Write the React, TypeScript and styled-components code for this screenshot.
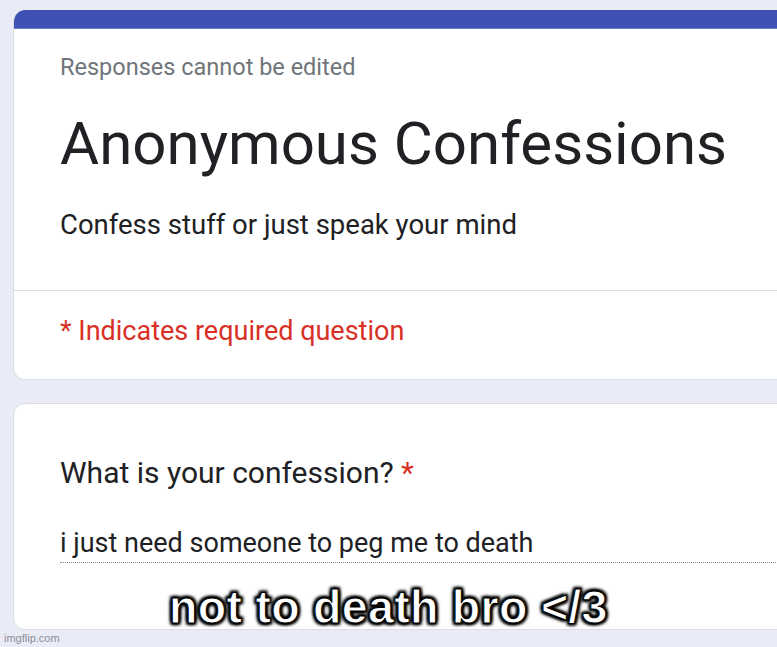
import { FC } from 'react';
import styled, { createGlobalStyle } from 'styled-components';

const GlobalStyle = createGlobalStyle`
  html, body {
    margin: 0;
    padding: 0;
    background: #e9ebf6;
    overflow: hidden;
  }
  body {
    font-family: Roboto, "Noto Sans", Arial, sans-serif;
    color: #202124;
  }
`;

const App: FC = () => {
  return (
    <>
      <GlobalStyle />
      <Page>
        <HeaderCard>
          <ThemeBar />
          <HeaderBody>
            <Notice>Responses cannot be edited</Notice>
            <Title>Anonymous Confessions</Title>
            <Description>Confess stuff or just speak your mind</Description>
          </HeaderBody>
          <RequiredRow>
            <RequiredNote>* Indicates required question</RequiredNote>
          </RequiredRow>
        </HeaderCard>
        <QuestionCard>
          <QuestionTitle>
            What is your confession? <Asterisk>*</Asterisk>
          </QuestionTitle>
          <Answer>i just need someone to peg me to death</Answer>
        </QuestionCard>
        <Caption>not to death bro &lt;/3</Caption>
        <Watermark>imgflip.com</Watermark>
      </Page>
    </>
  );
};

export default App;

const Page = styled.div`
  width: 777px;
  height: 647px;
  padding: 10px 0 0 13px;
  box-sizing: border-box;
  position: relative;
  overflow: hidden;
`;

const Card = styled.div`
  width: 820px;
  background: #fff;
  border: 1px solid #dadce0;
  border-radius: 12px;
  box-sizing: border-box;
  overflow: hidden;
`;

const HeaderCard = styled(Card)`
  border-top: none;
`;

const ThemeBar = styled.div`
  height: 18px;
  background: #3f51b5;
  border-bottom: 1px solid #6d7bc6;
`;

const HeaderBody = styled.div`
  padding: 24px 0 0 46px;
  height: 262px;
  box-sizing: border-box;
  border-bottom: 1px solid #dadce0;
`;

const Notice = styled.div`
  font-size: 23.5px;
  line-height: 28px;
  color: #70757a;
`;

const Title = styled.div`
  margin-top: 27px;
  font-size: 60px;
  line-height: 72px;
  color: #202124;
`;

const Description = styled.div`
  margin-top: 29px;
  font-size: 27.5px;
  line-height: 32px;
  color: #202124;
`;

const RequiredRow = styled.div`
  height: 88px;
  padding: 24px 0 0 46px;
  box-sizing: border-box;
`;

const RequiredNote = styled.div`
  font-size: 27px;
  line-height: 32px;
  color: #d93025;
`;

const QuestionCard = styled(Card)`
  margin-top: 23px;
  height: 227px;
  padding: 51px 0 0 46px;
`;

const QuestionTitle = styled.div`
  font-size: 30px;
  line-height: 36px;
  color: #202124;
`;

const Asterisk = styled.span`
  color: #d93025;
`;

const Answer = styled.div`
  margin-top: 36px;
  width: 760px;
  font-size: 27px;
  line-height: 32px;
  padding-bottom: 3px;
  color: #202124;
  border-bottom: 1px dotted #8a8d91;
`;

/* meme caption laid over the screenshot */
const Caption = styled.div`
  position: absolute;
  left: 169px;
  top: 585px;
  font-family: "Liberation Sans", Arial, sans-serif;
  font-weight: 700;
  font-size: 46.5px;
  letter-spacing: 0.3px;
  line-height: 44px;
  color: #fff;
  white-space: nowrap;
  -webkit-text-stroke: 1px #000;
  text-shadow:
    0 0 2px #000,
    0 0 3px #000,
    2px 2px 3px #000,
    -2px -2px 3px #000,
    2px -2px 3px #000,
    -2px 2px 3px #000;
`;

const Watermark = styled.div`
  position: absolute;
  left: 4px;
  bottom: 3px;
  font-family: "Liberation Sans", Arial, sans-serif;
  font-size: 11px;
  color: #8d8f96;
`;
